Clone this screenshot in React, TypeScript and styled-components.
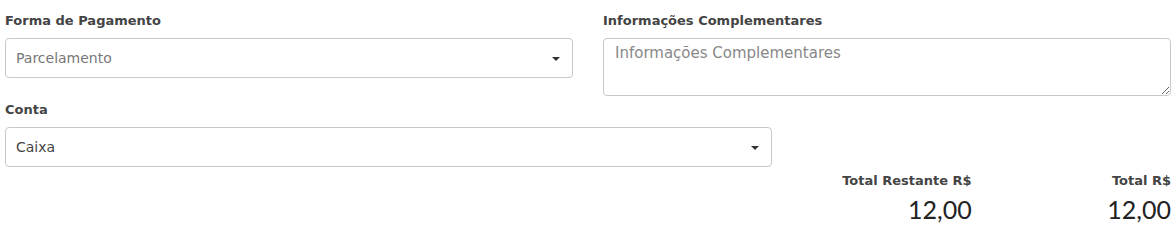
import React from "react";
import styled, { createGlobalStyle } from "styled-components";

const Global = createGlobalStyle`
  html, body { margin: 0; padding: 0; background: #fff; }
  body { font-family: "DejaVu Sans", "Open Sans", sans-serif; color: #333; }
  * { box-sizing: border-box; }
`;

const Page = styled.div`
  width: 1176px;
  padding: 12px 5px 0 5px;
`;

const Grid = styled.div`
  display: grid;
  grid-template-columns: repeat(12, 1fr);
  column-gap: 30px;
  row-gap: 5px;
  align-items: start;
`;

const Field = styled.div<{ $span: number; $start?: number }>`
  grid-column: ${(p) => (p.$start ? `${p.$start} / span ${p.$span}` : `span ${p.$span}`)};
  display: flex;
  flex-direction: column;
`;

const Label = styled.label`
  font-size: 13px;
  font-weight: 700;
  line-height: 18px;
  color: #444;
  margin-bottom: 8px;
`;

const SelectBox = styled.div<{ $muted?: boolean }>`
  position: relative;
  height: 40px;
  border: 1px solid #c8c8c8;
  border-radius: 4px;
  padding: 0 30px 0 10px;
  display: flex;
  align-items: center;
  font-size: 14px;
  color: ${(p) => (p.$muted ? "#777" : "#444")};
  background: #fff;
`;

const Caret = styled.span`
  position: absolute;
  right: 12px;
  top: 18px;
  width: 0;
  height: 0;
  border-left: 4px solid transparent;
  border-right: 4px solid transparent;
  border-top: 4px solid #333;
`;

const TextArea = styled.textarea`
  height: 58px;
  border: 1px solid #c8c8c8;
  border-radius: 4px;
  padding: 5px 11px;
  font-family: inherit;
  font-size: 15px;
  color: #444;
  resize: vertical;
  outline: none;
  &::placeholder { color: #888; }
`;

const TotalsRow = styled.div`
  display: grid;
  grid-template-columns: repeat(12, 1fr);
  column-gap: 30px;
  margin-top: 5px;
`;

const Total = styled.div<{ $start: number }>`
  grid-column: ${(p) => p.$start} / span 2;
  display: flex;
  flex-direction: column;
  align-items: flex-end;
`;

const TotalLabel = styled.div`
  font-size: 13px;
  font-weight: 700;
  line-height: 18px;
  color: #444;
`;

const TotalValue = styled.div`
  font-family: Lato, "Open Sans", sans-serif;
  font-size: 25px;
  font-weight: 400;
  line-height: 38px;
  color: #222;
`;

export default function App() {
  return (
    <>
      <Global />
      <Page>
        <Grid>
          <Field $span={6}>
            <Label>Forma de Pagamento</Label>
            <SelectBox $muted>
              Parcelamento
              <Caret />
            </SelectBox>
          </Field>
          <Field $span={6}>
            <Label>Informações Complementares</Label>
            <TextArea placeholder="Informações Complementares" />
          </Field>
          <Field $span={8} $start={1}>
            <Label>Conta</Label>
            <SelectBox>
              Caixa
              <Caret />
            </SelectBox>
          </Field>
        </Grid>
        <TotalsRow>
          <Total $start={9}>
            <TotalLabel>Total Restante R$</TotalLabel>
            <TotalValue>12,00</TotalValue>
          </Total>
          <Total $start={11}>
            <TotalLabel>Total R$</TotalLabel>
            <TotalValue>12,00</TotalValue>
          </Total>
        </TotalsRow>
      </Page>
    </>
  );
}
